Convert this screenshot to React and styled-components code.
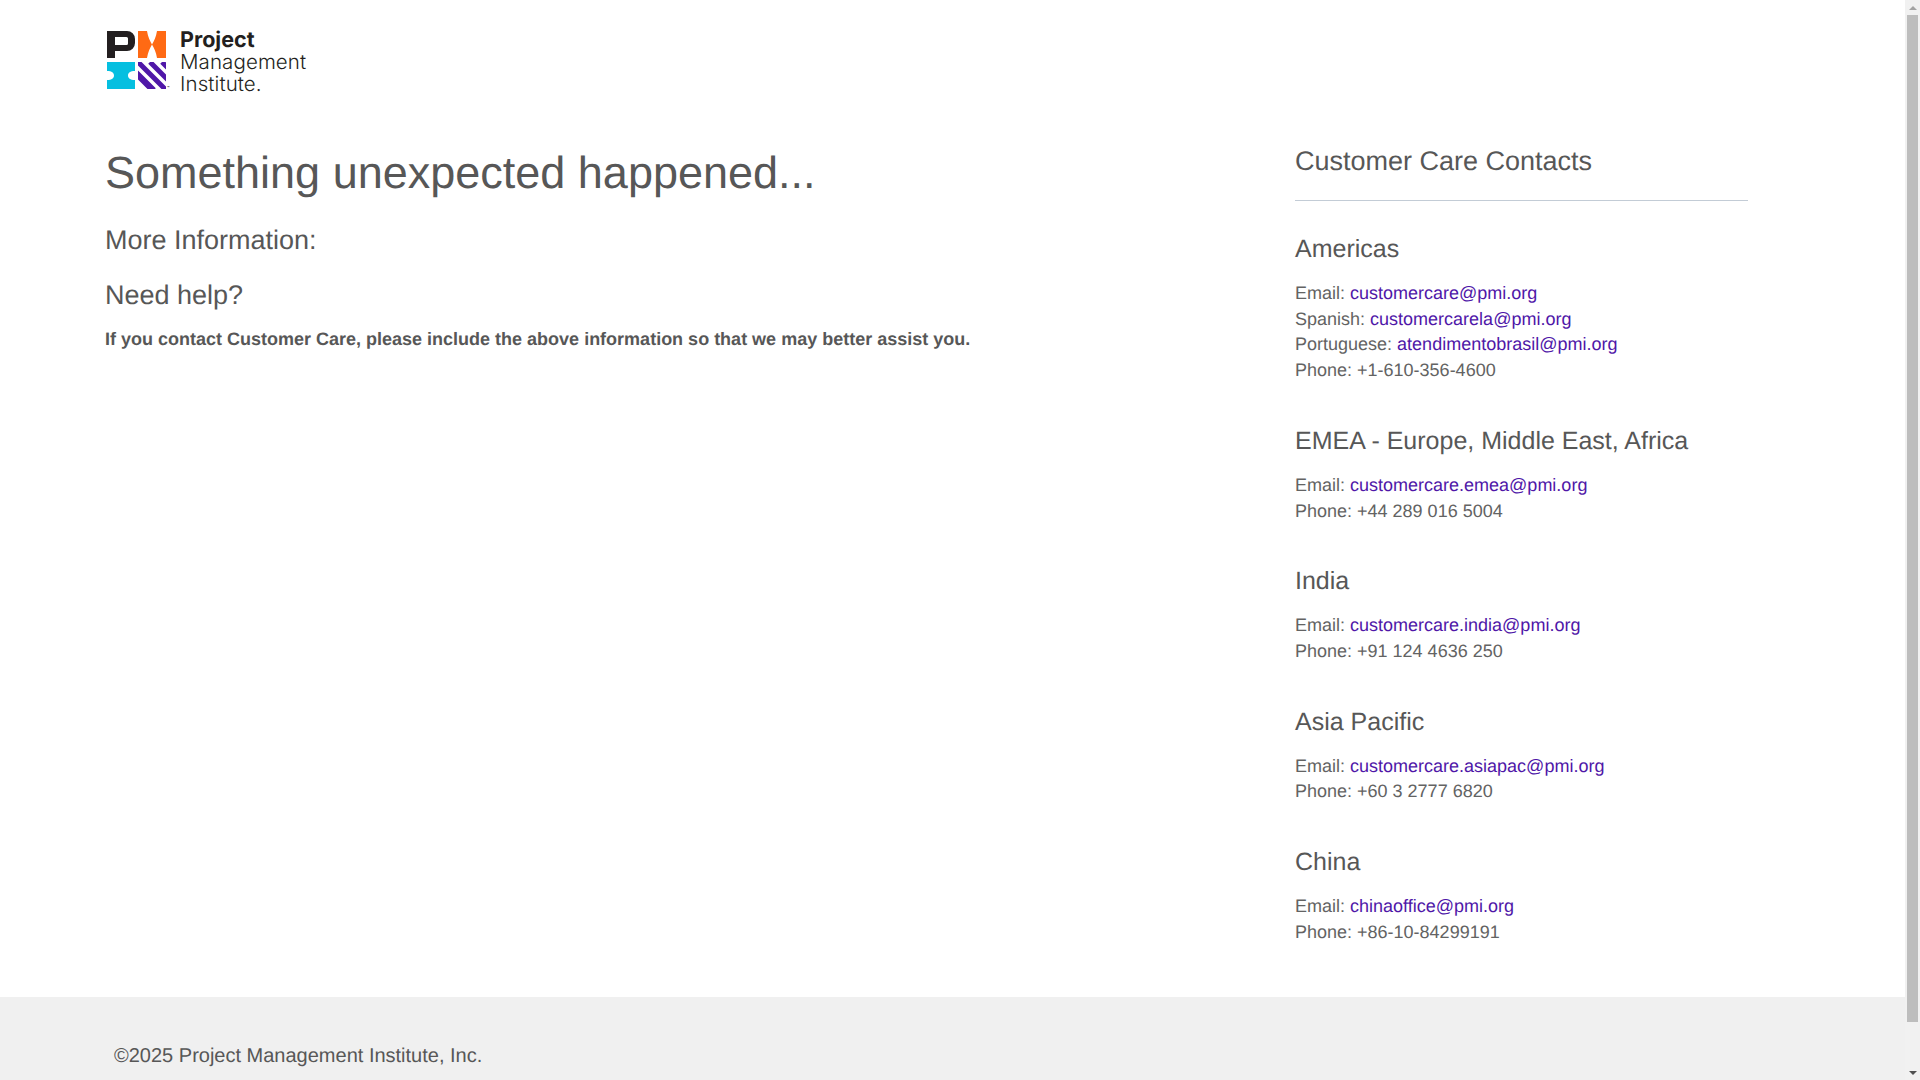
import React from 'react';
import styled, { createGlobalStyle } from 'styled-components';

const GlobalStyle = createGlobalStyle`
  body {
    margin: 0;
    background: #fff;
    color: #575757;
    font-family: 'Liberation Sans', Arial, sans-serif;
    font-size: 18px;
    line-height: 1.42857;
    text-rendering: geometricPrecision;
  }
`;

const Header = styled.header`
  display: flex;
  padding: 30px 105px 0;
  height: 110px;
  box-sizing: border-box;
`;

const Logo = styled.div`
  display: flex;
  gap: 9px;
  color: #231f20;
  font-family: Inter, sans-serif;
`;

const LogoMark = styled.svg`
  display: block;
  width: 66px;
  height: 60px;
`;

const LogoText = styled.div`
  display: flex;
  flex-direction: column;
  margin-top: -0.5px;
  font-size: 20.5px;
  font-weight: 300;
  line-height: 21.5px;
  letter-spacing: 0.1px;
`;

const LogoBold = styled.span`
  font-size: 21.5px;
  font-weight: 700;
  letter-spacing: 0;
`;

const Main = styled.main`
  display: grid;
  grid-template-columns: 1190px 453px;
  padding-left: 105px;
  height: 887px;
  box-sizing: border-box;
`;

const Title = styled.h1`
  margin: 37px 0 0;
  font-size: 45px;
  font-weight: 400;
  line-height: 52px;
`;

const SubTitle = styled.h2`
  margin: 25px 0 0;
  font-size: 27px;
  font-weight: 400;
  line-height: 32px;

  & + & {
    margin-top: 23px;
  }
`;

const HelpText = styled.p`
  margin: 16px 0 0;
  font-weight: 700;
`;

const Aside = styled.aside`
  padding-top: 33px;
`;

const AsideTitle = styled.h2`
  margin: 0;
  padding-bottom: 21px;
  border-bottom: 1px solid #c3ccd6;
  font-size: 27px;
  font-weight: 400;
  line-height: 36px;
`;

const Region = styled.section`
  margin-top: ${({ $first }) => ($first ? '30px' : '39px')};
`;

const RegionName = styled.h3`
  margin: 0 0 14px;
  font-size: 25px;
  font-weight: 400;
  line-height: 36px;
`;

const ContactLine = styled.div`
  color: #636363;
`;

const MailLink = styled.a`
  color: #4f17a8;
  text-decoration: none;
`;

const Footer = styled.footer`
  height: 129px;
  padding: 45px 114px 0;
  box-sizing: border-box;
  background: #f0f0f0;
  font-size: 20px;
`;

const Scrollbar = styled.div`
  position: fixed;
  top: 0;
  right: 0;
  bottom: 0;
  display: flex;
  flex-direction: column;
  width: 15px;
  background: #f1f1f1;
`;

const ScrollArrow = styled.div`
  display: flex;
  flex: none;
  align-items: center;
  justify-content: center;
  height: 15px;

  &::before {
    content: '';
    border-left: 4px solid transparent;
    border-right: 4px solid transparent;
    border-${({ $down }) => ($down ? 'top' : 'bottom')}: 4px solid ${({ $down }) =>
      $down ? '#505050' : '#a3a3a3'};
  }
`;

const ScrollThumb = styled.div`
  flex: none;
  height: 1007px;
  margin: 0 2px;
  background: #bdbdbd;
`;

const ScrollRest = styled.div`
  flex: 1;
`;

const regions = [
  {
    name: 'Americas',
    lines: [
      ['Email:', 'customercare@pmi.org'],
      ['Spanish:', 'customercarela@pmi.org'],
      ['Portuguese:', 'atendimentobrasil@pmi.org'],
      ['Phone: +1-610-356-4600'],
    ],
  },
  {
    name: 'EMEA - Europe, Middle East, Africa',
    lines: [['Email:', 'customercare.emea@pmi.org'], ['Phone: +44 289 016 5004']],
  },
  {
    name: 'India',
    lines: [['Email:', 'customercare.india@pmi.org'], ['Phone: +91 124 4636 250']],
  },
  {
    name: 'Asia Pacific',
    lines: [['Email:', 'customercare.asiapac@pmi.org'], ['Phone: +60 3 2777 6820']],
  },
  {
    name: 'China',
    lines: [['Email:', 'chinaoffice@pmi.org'], ['Phone: +86-10-84299191']],
  },
];

const PmiMark = () => (
  <LogoMark viewBox="0 0 66 60" aria-hidden="true">
    <defs>
      <clipPath id="stripes-box">
        <rect x="33" y="32" width="28" height="27" />
      </clipPath>
    </defs>
    <path
      fill="#231f20"
      fillRule="evenodd"
      d="M2 1h20a8 8 0 0 1 8 8v4a8 8 0 0 1-8 8H10v7H2zM10 7v8h11.500a1.500 1.500 0 0 0 1.500-1.500v-5a1.500 1.500 0 0 0-1.500-1.500z"
    />
    <path
      fill="#ff6a14"
      d="M33 1h9c1 6 3 10 5 13.500c2-3.500 4-7.500 5-13.500h9v27h-9c-1-6-3-10-5-13.500c-2 3.500-4 7.500-5 13.500h-9z"
    />
    <path
      fill="#05bfe0"
      d="M2 32h28v9c-5 0-7 2-7 4.500s2 4.500 7 4.500v9H2v-9c5 0 7-2 7-4.500S7 41 2 41z"
    />
    <g clipPath="url(#stripes-box)" stroke="#4f17a8" strokeWidth="5">
      <path d="M21 32l28 28M33 32l28 28M45 32l28 28M57 32l28 28M29 42l20 20" />
    </g>
    <text x="62" y="59" fontSize="4" fill="#231f20">
      ™
    </text>
  </LogoMark>
);

const App = () => (
  <>
    <GlobalStyle />
    <Header>
      <Logo>
        <PmiMark />
        <LogoText>
          <LogoBold>Project</LogoBold>
          <span>Management</span>
          <span>Institute.</span>
        </LogoText>
      </Logo>
    </Header>
    <Main>
      <div>
        <Title>Something unexpected happened...</Title>
        <SubTitle>More Information:</SubTitle>
        <SubTitle>Need help?</SubTitle>
        <HelpText>
          If you contact Customer Care, please include the above information so that we may better
          assist you.
        </HelpText>
      </div>
      <aside>
        <Aside>
          <AsideTitle>Customer Care Contacts</AsideTitle>
          {regions.map((region, index) => (
            <Region key={region.name} $first={index === 0}>
              <RegionName>{region.name}</RegionName>
              {region.lines.map(([label, mail]) => (
                <ContactLine key={label}>
                  {label}
                  {mail && (
                    <>
                      {' '}
                      <MailLink href={`mailto:${mail}`}>{mail}</MailLink>
                    </>
                  )}
                </ContactLine>
              ))}
            </Region>
          ))}
        </Aside>
      </aside>
    </Main>
    <Footer>©2025 Project Management Institute, Inc.</Footer>
    <Scrollbar>
      <ScrollArrow />
      <ScrollThumb />
      <ScrollRest />
      <ScrollArrow $down />
    </Scrollbar>
  </>
);

export default App;
